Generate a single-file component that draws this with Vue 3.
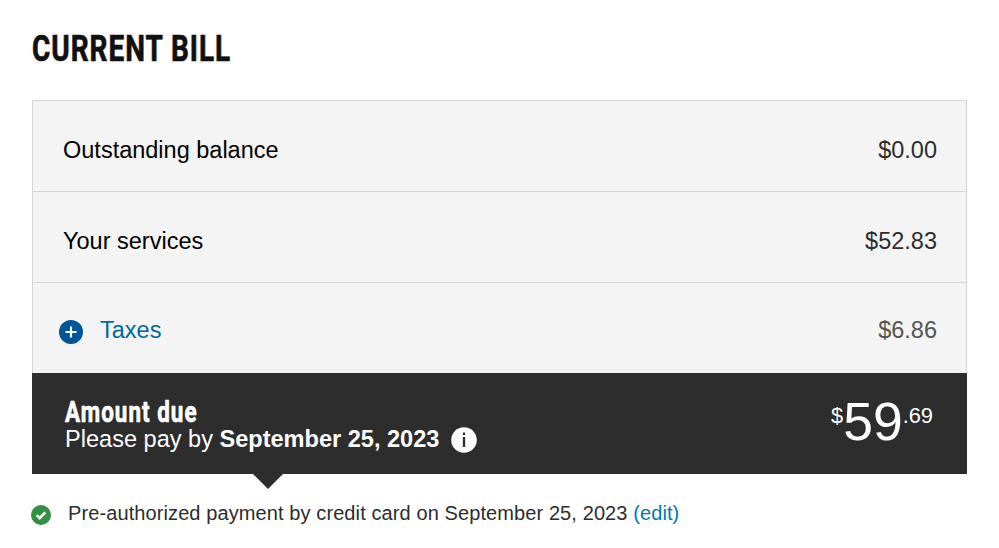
<script setup>
import { ref } from 'vue';

const charges = ref([
  { id: 1, label: 'Outstanding balance', amount: '$0.00', expandable: false },
  { id: 2, label: 'Your services', amount: '$52.83', expandable: false },
  { id: 3, label: 'Taxes', amount: '$6.86', expandable: true },
]);

const total = { dollars: '59', cents: '69' };
const dueDate = 'September 25, 2023';
</script>

<template>
  <main class="bill">
    <h1 class="title"><span>CURRENT BILL</span></h1>

    <div class="charges">
      <div
        v-for="charge in charges"
        :key="charge.id"
        :class="['charge', { expandable: charge.expandable }]"
      >
        <svg v-if="charge.expandable" class="plus-icon" viewBox="0 0 24 24">
          <circle cx="12" cy="12" r="12" fill="#00549a" />
          <path d="M12 6.5v11M6.5 12h11" stroke="#fff" stroke-width="2.2" />
        </svg>
        <span class="label">{{ charge.label }}</span>
        <span class="amount">{{ charge.amount }}</span>
      </div>
    </div>

    <div class="due">
      <div class="due-text">
        <h2><span>Amount due</span></h2>
        <div class="pay-by">
          <span>Please pay by <strong>{{ dueDate }}</strong></span>
          <svg class="info-icon" viewBox="0 0 26 26">
            <circle cx="13" cy="13" r="12.8" fill="#fff" />
            <path d="M13 10v10" stroke="#2d2d2d" stroke-width="2.3" />
            <path d="M13 5.5v2.6" stroke="#2d2d2d" stroke-width="2.3" />
          </svg>
        </div>
      </div>
      <div class="total">
        <span class="small">$</span>
        <span class="dollars">{{ total.dollars }}</span>
        <span class="small">.{{ total.cents }}</span>
      </div>
    </div>

    <div class="note">
      <svg class="check-icon" viewBox="0 0 20 20">
        <circle cx="10" cy="10" r="10" fill="#339043" />
        <path d="M5.7 10.2l3 3 5.6-5.8" fill="none" stroke="#fff" stroke-width="2.6" />
      </svg>
      <span>Pre-authorized payment by credit card on {{ dueDate }} <a>(edit)</a></span>
    </div>
  </main>
</template>

<style>
body {
  margin: 0;
  background-color: #fff;
}
</style>

<style scoped>
.bill {
  box-sizing: border-box;
  width: 999px;
  height: 548px;
  padding: 25px 32px 0;
  font-family: "Liberation Sans", Arial, sans-serif;
  color: #2d2d2d;
  overflow: hidden;
}

.title {
  margin: 0;
  height: 75px;
  font-family: Roboto, sans-serif;
  font-size: 37.5px;
  line-height: 47px;
  font-weight: 700;
  color: #111;
}

/* Condensed display face */
.title span,
h2 span {
  display: inline-block;
  white-space: nowrap;
  letter-spacing: 1.3px;
  -webkit-text-stroke: 0.7px currentColor;
  transform: scaleX(0.746);
  transform-origin: left center;
}

.charges {
  border: 1px solid #d4d4d4;
  border-bottom: none;
  background-color: #f4f4f4;
}

.charge {
  box-sizing: border-box;
  display: flex;
  align-items: center;
  height: 91px;
  padding: 8px 29px 0 30px;
  border-bottom: 1px solid #d4d4d4;
  font-size: 23.5px;
  line-height: 28px;
}

.charge:last-child {
  height: 90px;
  border-bottom: none;
}

.label {
  flex-grow: 1;
  color: #000;
}

.charge.expandable {
  padding-top: 4px;
  padding-left: 26px;
}

.expandable .label {
  color: #006a99;
}

.expandable .amount {
  color: #555;
}

.plus-icon {
  width: 24px;
  height: 24px;
  margin: 4px 17px 0 0;
}

.due {
  position: relative;
  box-sizing: border-box;
  display: flex;
  justify-content: space-between;
  height: 101px;
  padding: 23px 34px 0 33px;
  background-color: #2d2d2d;
  color: #fff;
}

/* Pointer towards the payment note */
.due::after {
  content: '';
  position: absolute;
  top: 100px;
  left: 220px;
  border: 16px solid transparent;
  border-top-color: #2d2d2d;
  border-bottom: none;
}

h2 {
  margin: 0;
  height: 29px;
  font-family: Roboto, sans-serif;
  font-size: 30px;
  line-height: 31px;
  font-weight: 700;
}

h2 span {
  letter-spacing: 1.4px;
}

.pay-by {
  display: flex;
  align-items: center;
  gap: 12px;
  font-size: 23.55px;
  line-height: 28px;
}

.info-icon {
  width: 26px;
  height: 26px;
  margin-top: 2px;
}

.total {
  display: flex;
  align-items: flex-start;
}

.small {
  margin-top: 7px;
  font-size: 21.8px;
  line-height: 25px;
}

.dollars {
  margin-top: -1px;
  font-size: 53.5px;
  line-height: 54px;
}

.note {
  display: flex;
  align-items: center;
  gap: 17px;
  height: 24px;
  margin-top: 27px;
  margin-left: -1px;
  font-size: 20px;
  line-height: 24px;
  letter-spacing: 0.1px;
}

.check-icon {
  width: 20px;
  height: 20px;
  margin-top: 4px;
}

.note a {
  color: #0078b0;
}
</style>
